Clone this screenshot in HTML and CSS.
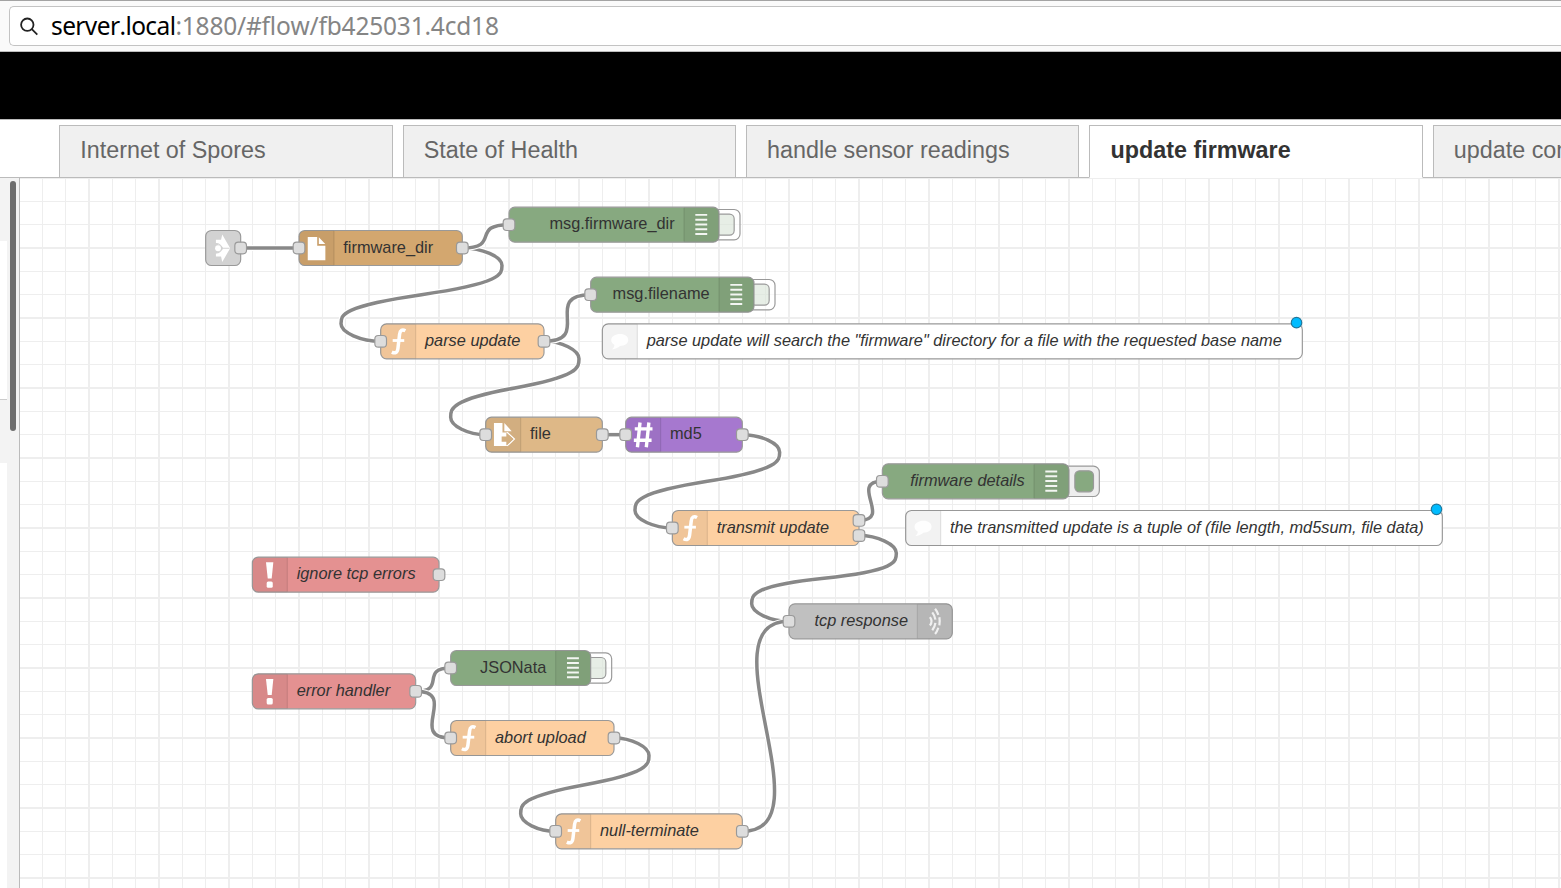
FILE: index.html
```html
<!DOCTYPE html>
<html lang="en">
<head>
<meta charset="utf-8">
<title>Node-RED : update firmware</title>
<link rel="stylesheet" href="styles.css">
</head>
<body>
<header class="toolbar">
  <div class="urlbar">
    <svg class="search" viewBox="0 0 20 20"><circle cx="8.3" cy="7.7" r="6.2"/><path d="M12.8 12.2 18.3 17.7"/></svg>
    <span class="host">server.local</span><span class="path">:1880/#flow/fb425031.4cd18</span>
  </div>
</header>
<div class="banner"></div>
<nav class="tabs">
  <div class="tab">Internet of Spores</div>
  <div class="tab">State of Health</div>
  <div class="tab">handle sensor readings</div>
  <div class="tab active">update firmware</div>
  <div class="tab">update con</div>
</nav>
<main class="workspace">
  <aside class="palette">
    <div class="panel"><div class="cat first"></div><div class="gap"></div><div class="cat second"></div></div>
    <div class="track"><div class="thumb"></div></div>
  </aside>
  <svg class="canvas" width="1541" height="710">
    <defs>
      <pattern id="grid" x="68" y="69" width="70" height="70" patternUnits="userSpaceOnUse">
        <path class="gridline" d="M0 0H2V70H0ZM24 0H25V70H24ZM47 0H48V70H47ZM0 0H70V2H0ZM0 24H70V25H0ZM0 47H70V48H0Z"/>
      </pattern>
      <g id="shade-l"><path class="shade" d="M5 0H30V30H5A5 5 0 0 1 0 25V5A5 5 0 0 1 5 0Z"/><path class="sep" d="M30 .5V29.5"/></g>
      <g id="shade-r"><path class="shade" d="M0 0H25A5 5 0 0 1 30 5V25A5 5 0 0 1 25 30H0Z"/><path class="sep" d="M0 .5V29.5"/></g>
      <rect id="port" class="port" x="-5" y="-5" width="10" height="10" rx="3"/>
      <g id="i-link"><path class="w" d="M8.8 8H13.2L14.2 3.4 21 15.2 14.2 27 13.2 22.2H8.8V19.7L14.5 16.2V14.2L8.8 10.7Z"/><path class="link-gap" d="M8.6 11.2C11 11 13 12.5 14.2 15.2H20.5M8.6 19.2C11 19.4 13 18 14.2 15.2"/><circle class="w" cx="10.6" cy="15.2" r="2.5"/></g>
      <path id="i-file" class="w" d="M7.5 5.6H15.6V13H22.6V25.6H7.5ZM17 5.8 22.5 11.6H17Z"/>
      <g id="i-fileout"><path class="w" d="M7.1 5H14.4V13.2H18.3V24.8H7.1ZM16 5 22.3 12H16Z"/><path class="out-edge" d="M18.4 13 24.6 18.8 18.4 24.6"/><path class="out-fill" d="M13.7 16.6H17.7V13.4L23.7 18.8 17.7 24.2V21H13.7Z"/></g>
      <g id="i-fn"><path class="wl" d="M21.2 6C18.6 4.6 16.6 5.4 16.2 9L14.8 21C14.3 25 12.4 25.6 9.6 24.2"/><path class="wl cross" d="M10.3 14.3H20.2"/></g>
      <path id="i-bars" class="bars" d="M9.7 6.6H19.9M9.7 10.7H19.9M9.7 14.8H19.9M9.7 18.9H19.9M9.7 23H19.9"/>
      <path id="i-hash" class="wl bold" d="M7.8 10H23M7 19.8H22.2M12.3 4.6 10.1 25.8M19.9 4.6 17.7 25.8"/>
      <g id="i-bang"><path class="w" d="M11.7 4.4H18L16.6 18.2H13.2Z"/><rect class="w" x="12.3" y="20.8" width="5.2" height="5.4" rx="1.3"/></g>
      <path id="i-bubble" class="w faint" d="M15.3 8.8C19.5 8.8 22.2 11 22.2 13.9 22.2 17 19.2 19 15.2 19 13.5 20.6 11 21.7 8.2 21.9 9.7 20.8 10.4 19.6 10.3 18 8.5 17 7.6 15.6 7.6 13.9 7.6 11 11 8.8 15.3 8.8Z"/>
      <path id="i-waves" class="waves" d="M10.8 11.4Q13.6 15 10.8 18.6M12.8 7.3Q15 10 15.5 13.6M15.5 16.4Q15 20 12.8 22.7M15.2 4.2Q17 6.3 18 9.5M18.9 11.5Q19.5 15 18.9 18.5M18 20.5Q17 23.7 15.2 25.8"/>
    </defs>
    <rect width="1541" height="710" fill="url(#grid)"/>
    <g transform="translate(-1 0) scale(1.166667)">
      <defs>
        <path id="w1" d="M190 60H240"/>
        <path id="w2" d="M380 60C397 60 414 67.5 414 75S414 90 345 100 276 117.5 276 125 293 140 310 140"/>
        <path id="w3" d="M380 60C413.5 60 386.5 40 420 40"/>
        <path id="w4" d="M450 140C465 140 480 147.5 480 155S480 170 425 180 370 197.5 370 205 385 220 400 220"/>
        <path id="w5" d="M450 140C492.4 140 447.6 100 490 100"/>
        <path id="w6" d="M500 220H520"/>
        <path id="w7" d="M620 220C636 220 652 227.5 652 235S652 250 590 260 528 277.5 528 285 544 300 560 300"/>
        <path id="w8" d="M720 293.5C749.3 293.5 710.7 260 740 260"/>
        <path id="w9" d="M720 306.5C736 306.5 752 314 752 321.5S752 336.5 690 343 628 357.5 628 365 644 380 660 380"/>
        <path id="w10" d="M340 440C367 440 343 420 370 420"/>
        <path id="w11" d="M340 440C377.5 440 332.5 480 370 480"/>
        <path id="w12" d="M510 480C525 480 540 487.5 540 495S540 510 485 520 430 537.5 430 545 445 560 460 560"/>
        <path id="w13" d="M620 560C695 560 585 380 660 380"/>
      </defs>
      <g class="wires">
        <use href="#w1" class="halo"/><use href="#w1" class="wire"/>
        <use href="#w2" class="halo"/><use href="#w2" class="wire"/>
        <use href="#w3" class="halo"/><use href="#w3" class="wire"/>
        <use href="#w4" class="halo"/><use href="#w4" class="wire"/>
        <use href="#w5" class="halo"/><use href="#w5" class="wire"/>
        <use href="#w6" class="halo"/><use href="#w6" class="wire"/>
        <use href="#w7" class="halo"/><use href="#w7" class="wire"/>
        <use href="#w8" class="halo"/><use href="#w8" class="wire"/>
        <use href="#w9" class="halo"/><use href="#w9" class="wire"/>
        <use href="#w10" class="halo"/><use href="#w10" class="wire"/>
        <use href="#w11" class="halo"/><use href="#w11" class="wire"/>
        <use href="#w12" class="halo"/><use href="#w12" class="wire"/>
        <use href="#w13" class="halo"/><use href="#w13" class="wire"/>
      </g>

      <g transform="translate(160 45)"><rect class="node link" width="30" height="30" rx="5"/><use href="#i-link"/><use href="#port" x="30" y="15"/></g>

      <g transform="translate(240 45)"><rect class="node filein" width="140" height="30" rx="5"/><use href="#shade-l"/><use href="#i-file"/><text x="38" y="19">firmware_dir</text><use href="#port" y="15"/><use href="#port" x="140" y="15"/></g>

      <g transform="translate(420 25)"><rect class="btn off" x="166" y="2" width="32" height="26" rx="5"/><rect class="btn-in off" x="177" y="6" width="16" height="18" rx="4"/><rect class="node debug" width="180" height="30" rx="5"/><use href="#shade-r" x="150"/><use href="#i-bars" x="150"/><text class="end" x="142" y="19">msg.firmware_dir</text><use href="#port" y="15"/></g>

      <g transform="translate(310 125)"><rect class="node fn" width="140" height="30" rx="5"/><use href="#shade-l"/><use href="#i-fn"/><text class="it" x="38" y="19">parse update</text><use href="#port" y="15"/><use href="#port" x="140" y="15"/></g>

      <g transform="translate(490 85)"><rect class="btn off" x="126" y="2" width="32" height="26" rx="5"/><rect class="btn-in off" x="137" y="6" width="16" height="18" rx="4"/><rect class="node debug" width="140" height="30" rx="5"/><use href="#shade-r" x="110"/><use href="#i-bars" x="110"/><text class="end" x="102" y="19">msg.filename</text><use href="#port" y="15"/></g>

      <g transform="translate(500 125)"><rect class="node comment" width="600" height="30" rx="5"/><use href="#shade-l"/><use href="#i-bubble"/><text class="it" x="38" y="19">parse update will search the "firmware" directory for a file with the requested base name</text><circle class="changed" cx="595" cy="-1" r="4.5"/></g>

      <g transform="translate(400 205)"><rect class="node file" width="100" height="30" rx="5"/><use href="#shade-l"/><use href="#i-fileout"/><text x="38" y="19">file</text><use href="#port" y="15"/><use href="#port" x="100" y="15"/></g>

      <g transform="translate(520 205)"><rect class="node md5" width="100" height="30" rx="5"/><use href="#shade-l"/><use href="#i-hash"/><text x="38" y="19">md5</text><use href="#port" y="15"/><use href="#port" x="100" y="15"/></g>

      <g transform="translate(560 285)"><rect class="node fn" width="160" height="30" rx="5"/><use href="#shade-l"/><use href="#i-fn"/><text class="it" x="38" y="19">transmit update</text><use href="#port" y="15"/><use href="#port" x="160" y="8.5"/><use href="#port" x="160" y="21.5"/></g>

      <g transform="translate(740 245)"><rect class="btn" x="154" y="2" width="32" height="26" rx="5"/><rect class="btn-in" x="165" y="6" width="16" height="18" rx="4"/><rect class="node debug" width="160" height="30" rx="5"/><use href="#shade-r" x="130"/><use href="#i-bars" x="130"/><text class="it end" x="122" y="19">firmware details</text><use href="#port" y="15"/></g>

      <g transform="translate(760 285)"><rect class="node comment" width="460" height="30" rx="5"/><use href="#shade-l"/><use href="#i-bubble"/><text class="it" x="38" y="19">the transmitted update is a tuple of (file length, md5sum, file data)</text><circle class="changed" cx="455" cy="-1" r="4.5"/></g>

      <g transform="translate(660 365)"><rect class="node tcp" width="140" height="30" rx="5"/><use href="#shade-r" x="110"/><use href="#i-waves" x="110"/><text class="it end" x="102" y="19">tcp response</text><use href="#port" y="15"/></g>

      <g transform="translate(200 325)"><rect class="node catch" width="160" height="30" rx="5"/><use href="#shade-l"/><use href="#i-bang"/><text class="it" x="38" y="19">ignore tcp errors</text><use href="#port" x="160" y="15"/></g>

      <g transform="translate(200 425)"><rect class="node catch" width="140" height="30" rx="5"/><use href="#shade-l"/><use href="#i-bang"/><text class="it" x="38" y="19">error handler</text><use href="#port" x="140" y="15"/></g>

      <g transform="translate(370 405)"><rect class="btn off" x="106" y="2" width="32" height="26" rx="5"/><rect class="btn-in off" x="117" y="6" width="16" height="18" rx="4"/><rect class="node debug" width="120" height="30" rx="5"/><use href="#shade-r" x="90"/><use href="#i-bars" x="90"/><text class="end" x="82" y="19">JSONata</text><use href="#port" y="15"/></g>

      <g transform="translate(370 465)"><rect class="node fn" width="140" height="30" rx="5"/><use href="#shade-l"/><use href="#i-fn"/><text class="it" x="38" y="19">abort upload</text><use href="#port" y="15"/><use href="#port" x="140" y="15"/></g>

      <g transform="translate(460 545)"><rect class="node fn" width="160" height="30" rx="5"/><use href="#shade-l"/><use href="#i-fn"/><text class="it" x="38" y="19">null-terminate</text><use href="#port" y="15"/><use href="#port" x="160" y="15"/></g>
    </g>
  </svg>
</main>
</body>
</html>
```
FILE: styles.css
```css
* { box-sizing: border-box; }
body {
  margin: 0;
  height: 888px;
  overflow: hidden;
  display: flex;
  flex-direction: column;
  background: #fff;
  font-family: "Liberation Sans", Arial, sans-serif;
}

/* Browser chrome */
.toolbar {
  flex: none;
  height: 52px;
  padding: 5px 0 0 9px;
  border-top: 1px solid #a3a3a3;
  border-bottom: 1px solid #bdbdbd;
  background: #fafafa;
}
.urlbar {
  display: flex;
  align-items: center;
  height: 40px;
  padding-left: 9px;
  border: 1px solid #c3c3c3;
  border-right: 0;
  border-radius: 5px 0 0 5px;
  background: #fff;
  font: 24.5px/38px "Noto Sans", "Open Sans", sans-serif;
  font-kerning: none;
  white-space: nowrap;
}
.search { width: 20px; height: 20px; margin: 1px 12px 0 0; fill: none; stroke: #222; stroke-width: 1.8; }
.host { color: #000; letter-spacing: -0.6px; }
.path { color: #858585; letter-spacing: -0.2px; }

.banner { flex: none; height: 67px; background: #000; }

/* Flow tabs */
.tabs {
  flex: none;
  display: flex;
  gap: 10px;
  height: 59px;
  padding: 5px 0 0 59.2px;
  border-top: 1px solid #bbb;
  box-shadow: inset 0 -1px #bbb;
  overflow: hidden;
}
.tab {
  flex: none;
  width: 333.4px;
  padding-left: 20.1px;
  border: 1px solid #bbb;
  background: #f0f0f0;
  color: #666;
  font-size: 23.33px;
  line-height: 49px;
  white-space: nowrap;
}
.tab.active { border-bottom-color: #fff; background: #fff; color: #333; font-weight: bold; }

/* Palette edge */
.workspace { flex: 1; display: flex; min-height: 0; }
.palette { flex: none; display: flex; width: 20px; border-right: 1px solid #bbb; background: #f3f3f3; }
.panel { width: 7px; background: #fff; }
.cat { background: #f3f3f3; }
.cat.first { height: 63px; }
.gap { height: 158px; }
.cat.second { height: 64px; border-top: 1px solid #ccc; }
.track { padding: 3px 0 0 3px; }
.thumb { width: 6px; height: 250px; border-radius: 3px; background: #6e6e6e; }

/* Flow canvas */
.canvas { display: block; flex: none; }
.gridline { fill: #eee; }
.halo, .wire { fill: none; }
.halo { stroke: #fff; stroke-width: 5; }
.wire { stroke: #888; stroke-width: 3; }
.node { stroke: #999; stroke-width: 1; }
.link { fill: #d2d2d2; }
.filein { fill: #d3a76f; }
.file { fill: #deb887; }
.fn { fill: #fdd0a2; }
.debug { fill: #87a980; }
.md5 { fill: #a678cf; }
.catch { fill: #e49191; }
.tcp { fill: #c0c0c0; }
.comment { fill: #fff; }
.shade { fill: #000; fill-opacity: .05; }
.sep { fill: none; stroke: #000; stroke-opacity: .1; }
.port { fill: #ddd; stroke: #999; }
.btn { fill: #eee; stroke: #999; }
.btn.off { fill: #fff; fill-opacity: .6; }
.btn-in { fill: #87a980; stroke: #999; }
.btn-in.off { fill-opacity: .2; }
.changed { fill: #00bcff; stroke: #1f779c; stroke-width: 1; }

.w { fill: #fff; }
.faint { opacity: .9; }
.wl { fill: none; stroke: #fff; stroke-width: 3; }
.wl.cross { stroke-width: 2.4; }
.wl.bold { stroke-width: 2.9; }
.bars { fill: none; stroke: #fff; stroke-opacity: .9; stroke-width: 1.7; }
.waves { fill: none; stroke: #fff; stroke-opacity: .8; stroke-width: 1.9; }
.link-gap { fill: none; stroke: #d2d2d2; stroke-width: .9; }
.out-fill { fill: #d3af80; }
.out-edge { fill: none; stroke: #fff; stroke-width: 1.1; }

text { fill: #333; font-family: "Liberation Sans", Arial, sans-serif; font-size: 14px; }
.it { font-style: italic; }
.end { text-anchor: end; }
```
